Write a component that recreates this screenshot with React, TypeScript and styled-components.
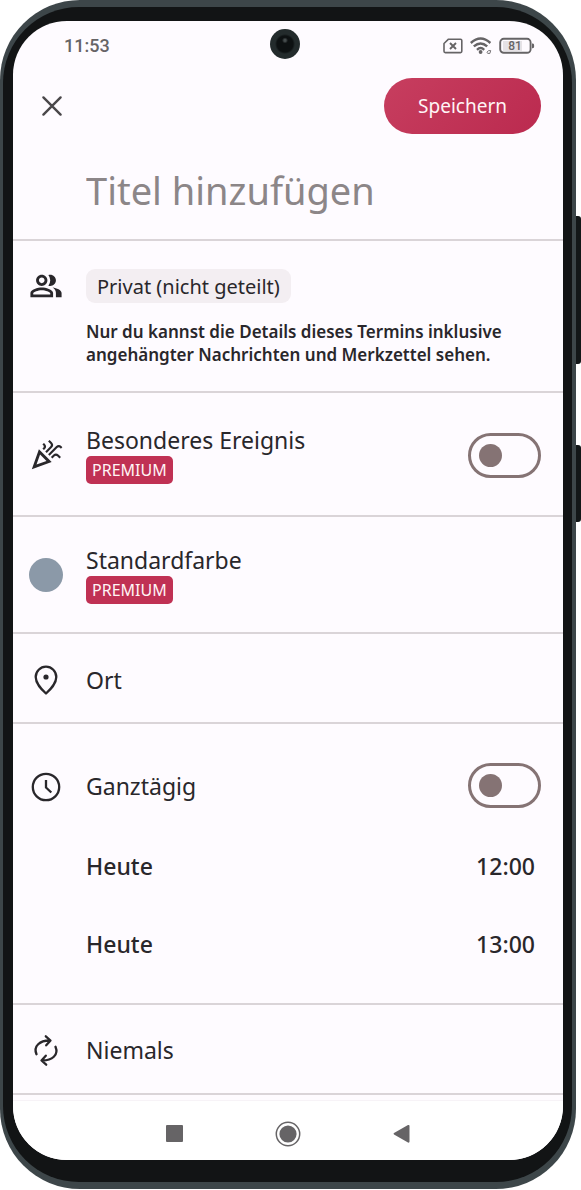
import React from "react";
import styled, { createGlobalStyle } from "styled-components";
import { MdOutlineCelebration, MdOutlinePeopleAlt } from "react-icons/md";

const ink = "#29272b";
const surface = "#fefbff";
const outline = "#857374";
const accent = "#c03154";
const system = "#666466";

const GlobalStyle = createGlobalStyle`
  * { box-sizing: border-box; }
  body { margin: 0; background: #fff; color: ${ink}; font-family: "Noto Sans", sans-serif; }
  button, input { font: inherit; color: inherit; }
  button { border: 0; padding: 0; background: none; cursor: pointer; }
  svg { display: block; }
`;

const Phone = styled.div`
  position: relative;
  margin-right: 5px;
  padding: 7px 4px 7px 3px;
  border-radius: 80px;
  background: #3d4649;
`;

const SideKey = styled.span<{ $top: number; $height: number }>`
  position: absolute;
  right: -5px;
  top: ${(p) => p.$top}px;
  width: 5px;
  height: ${(p) => p.$height}px;
  border-radius: 0 3px 3px 0;
  background: #131718;
`;

const Bezel = styled.div`
  padding: 14px 9px 22px 10px;
  border-radius: 76px;
  background: #121415;
`;

const Screen = styled.main`
  border-radius: 54px;
  overflow: hidden;
  background: ${surface};
`;

const Camera = styled.span`
  position: absolute;
  left: 270px;
  top: 29px;
  width: 30px;
  height: 30px;
  border-radius: 50%;
  background:
    radial-gradient(circle at 50% 38%, #454c4d 0 1px, transparent 3px),
    radial-gradient(circle, #0d1112 0 8px, #232b2c 10px);
`;

const StatusBar = styled.div`
  display: flex;
  align-items: center;
  justify-content: space-between;
  height: 49px;
  padding: 0 28px 0 51px;
  color: ${system};
`;

const Clock = styled.time`
  font: 500 18px/24px Roboto, sans-serif;
`;

const StatusIcons = styled.div`
  display: flex;
  align-items: center;
  gap: 7px;
`;

const Header = styled.header`
  display: flex;
  align-items: center;
  justify-content: space-between;
  padding: 8px 22px 8px 22px;
`;

const IconButton = styled.button`
  display: grid;
  place-items: center;
  width: 34px;
  height: 34px;
`;

const SaveButton = styled.button`
  height: 56px;
  padding: 0 34px;
  border-radius: 28px;
  background: linear-gradient(135deg, #c73e5f, #bb2a4f);
  color: #fff4f6;
  font-size: 19px;
`;

const TitleField = styled.input`
  display: block;
  width: 100%;
  height: 99px;
  padding: 0 22px 2px 73px;
  border: 0;
  border-bottom: 2px solid #dad4d8;
  outline: 0;
  background: none;
  font-size: 38px;
  &::placeholder { color: #8c8688; opacity: 1; }
`;

const Section = styled.section<{ $top: number; $bottom: number }>`
  padding: ${(p) => p.$top}px 22px ${(p) => p.$bottom}px 16px;
  border-bottom: 2px solid #dad4d8;
`;

const Row = styled.div<{ $align?: string }>`
  display: grid;
  grid-template-columns: 34px 1fr auto;
  column-gap: 23px;
  align-items: ${(p) => p.$align ?? "center"};
`;

const Label = styled.label`
  display: block;
  font-size: 23px;
  line-height: 28px;
`;

const TextButton = styled.button`
  font-size: 23px;
  line-height: 28px;
  text-align: left;
`;

const Chip = styled.button`
  height: 34px;
  padding: 0 11px;
  border-radius: 9px;
  background: #f3eef2;
  font-size: 20px;
`;

const Note = styled.p`
  margin: 17px 0 0;
  font-size: 17px;
  font-weight: 600;
  line-height: 23px;
`;

const Premium = styled.span`
  display: inline-block;
  margin-top: 2px;
  padding: 0 6px;
  border-radius: 5px;
  background: ${accent};
  color: #fff4f6;
  font-size: 16px;
  line-height: 28px;
  vertical-align: top;
`;

const Swatch = styled.span`
  width: 34px;
  height: 34px;
  border-radius: 50%;
  background: #8b99a8;
`;

const Switch = styled.input.attrs({ type: "checkbox", role: "switch" })`
  appearance: none;
  display: flex;
  align-items: center;
  width: 73px;
  height: 45px;
  margin: 0;
  padding: 0 8px;
  border: 3px solid ${outline};
  border-radius: 23px;
  cursor: pointer;
  &::before {
    content: "";
    width: 23px;
    height: 23px;
    border-radius: 50%;
    background: ${outline};
  }
  &:checked { justify-content: flex-end; }
`;

const Dates = styled.div`
  display: flex;
  flex-direction: column;
  gap: 50px;
  margin-top: 44px;
  padding: 0 6px 0 57px;
`;

const DateRow = styled.div`
  display: flex;
  justify-content: space-between;
`;

const DateButton = styled(TextButton)`
  font-weight: 500;
`;

const NavBar = styled.nav`
  display: flex;
  align-items: center;
  justify-content: center;
  gap: 88px;
  height: 60px;
  margin-top: 5px;
  padding-top: 6px;
  border-top: 1px solid #f7f3f7;
  background: #fff;
  color: ${system};
`;

const NavButton = styled.button`
  display: grid;
  place-items: center;
  width: 26px;
  height: 26px;
`;

const LineIcon = ({ children }: { children: React.ReactNode }) => (
  <svg width="34" height="34" viewBox="0 0 34 34" fill="none" stroke="currentColor" strokeWidth="2.3" strokeLinecap="round" strokeLinejoin="round" aria-hidden="true">
    {children}
  </svg>
);

const NoSimIcon = () => (
  <svg width="20" height="16" viewBox="0 0 20 16" fill="none" stroke="currentColor" strokeWidth="1.6" aria-hidden="true">
    <path d="M5.5 1.2H17.5Q18.8 1.2 18.8 2.5V13.3Q18.8 14.6 17.5 14.6H2.3Q1 14.6 1 13.3V5.5Z" strokeLinejoin="round" />
    <path d="M7 5l6 6M13 5l-6 6" strokeWidth="1.9" />
  </svg>
);

const WifiIcon = () => (
  <svg width="22" height="18" viewBox="0 0 22 18" fill="none" stroke="currentColor" strokeWidth="2.4" aria-hidden="true">
    <path d="M0.8 6Q10.6 -2.8 20.4 6M3.8 9.4Q10.6 3.400 17.200 9.400M7 12.800Q10.600 9.400 14.200 12.800" />
    <circle cx="10.6" cy="15" r="1.9" fill="currentColor" stroke="none" />
    <path d="M17 15.200l1.500-1.600h2.200l-.8 2.800h-2.200z" strokeWidth="0.9" />
  </svg>
);

const BatteryIcon = () => (
  <svg width="36" height="18" viewBox="0 0 36 18" fill="none" aria-hidden="true">
    <rect x="4" y="4" width="19" height="10" fill="#e6e2e6" />
    <rect x="1.2" y="1.8" width="30.4" height="14" rx="3.6" stroke="currentColor" strokeWidth="1.9" />
    <path d="M33 6.6h.8q1.400 0 1.400 2.300t-1.400 2.300h-.8z" fill="currentColor" />
    <text x="16" y="13" textAnchor="middle" fill="currentColor" fontFamily="Roboto, sans-serif" fontSize="12" fontWeight="500">81</text>
  </svg>
);

export default function App() {
  return (
    <>
      <GlobalStyle />
      <Phone>
        <SideKey $top={216} $height={148} />
        <SideKey $top={445} $height={77} />
        <Camera />
        <Bezel>
          <Screen>
            <StatusBar>
              <Clock>11:53</Clock>
              <StatusIcons>
                <NoSimIcon />
                <WifiIcon />
                <BatteryIcon />
              </StatusIcons>
            </StatusBar>
            <Header>
              <IconButton aria-label="Schließen">
                <svg width="24" height="24" viewBox="0 0 24 24" stroke="#4a474a" strokeWidth="2.4" strokeLinecap="round" aria-hidden="true">
                  <path d="M3.4 3.4L20.6 20.6M20.6 3.4L3.4 20.6" />
                </svg>
              </IconButton>
              <SaveButton>Speichern</SaveButton>
            </Header>
            <TitleField aria-label="Titel" placeholder="Titel hinzufügen" />

            <Section $top={28} $bottom={25}>
              <Row $align="start">
                <MdOutlinePeopleAlt size={34} />
                <div>
                  <Chip>Privat (nicht geteilt)</Chip>
                  <Note>Nur du kannst die Details dieses Termins inklusive angehängter Nachrichten und Merkzettel sehen.</Note>
                </div>
              </Row>
            </Section>

            <Section $top={33} $bottom={31}>
              <Row>
                <MdOutlineCelebration size={34} />
                <div>
                  <Label htmlFor="special">Besonderes Ereignis</Label>
                  <Premium>PREMIUM</Premium>
                </div>
                <Switch id="special" />
              </Row>
            </Section>

            <Section $top={29} $bottom={28}>
              <Row>
                <Swatch />
                <div>
                  <Label as="div">Standardfarbe</Label>
                  <Premium>PREMIUM</Premium>
                </div>
              </Row>
            </Section>

            <Section $top={29} $bottom={25}>
              <Row>
                <LineIcon>
                  <path d="M17 30.5C12.5 26.300 6.700 20.900 6.700 14a10.300 10.300 0 0 1 20.600 0C27.300 20.900 21.500 26.300 17 30.500Z" />
                  <circle cx="17" cy="14" r="2.600" fill="currentColor" stroke="none" />
                </LineIcon>
                <TextButton>Ort</TextButton>
              </Row>
            </Section>

            <Section $top={39} $bottom={45}>
              <Row>
                <LineIcon>
                  <circle cx="17" cy="18" r="13.200" />
                  <path d="M17 11V18.500L22.300 23.500" strokeLinecap="butt" />
                </LineIcon>
                <Label htmlFor="allday">Ganztägig</Label>
                <Switch id="allday" />
              </Row>
              <Dates>
                <DateRow>
                  <DateButton>Heute</DateButton>
                  <DateButton>12:00</DateButton>
                </DateRow>
                <DateRow>
                  <DateButton>Heute</DateButton>
                  <DateButton>13:00</DateButton>
                </DateRow>
              </Dates>
            </Section>

            <Section $top={28} $bottom={26}>
              <Row>
                <LineIcon>
                  <path d="M7.500 21.300C4 13 11 7.300 21 7.500M16.800 3.300L21.500 7.500L17.200 12.300" />
                  <path d="M26.500 13.700C30 22 23 27.700 13 27.500M17.200 31.700L12.500 27.500L16.800 22.700" />
                </LineIcon>
                <TextButton>Niemals</TextButton>
              </Row>
            </Section>

            <NavBar>
              <NavButton aria-label="Letzte Apps">
                <svg width="17" height="17" viewBox="0 0 17 17" aria-hidden="true"><rect width="17" height="17" rx="1" fill="currentColor" /></svg>
              </NavButton>
              <NavButton aria-label="Startseite">
                <svg width="26" height="26" viewBox="0 0 26 26" aria-hidden="true">
                  <circle cx="13" cy="13" r="11.700" fill="none" stroke="currentColor" strokeWidth="1.500" />
                  <circle cx="13" cy="13" r="8.600" fill="currentColor" />
                </svg>
              </NavButton>
              <NavButton aria-label="Zurück">
                <svg width="18" height="20" viewBox="0 0 18 20" aria-hidden="true"><path d="M1 9L15 1Q16.500 0.500 16.500 2V17.500Q16.500 19 15 18.500L1 10.500Q0 9.700 1 9Z" fill="currentColor" /></svg>
              </NavButton>
            </NavBar>
          </Screen>
        </Bezel>
      </Phone>
    </>
  );
}
